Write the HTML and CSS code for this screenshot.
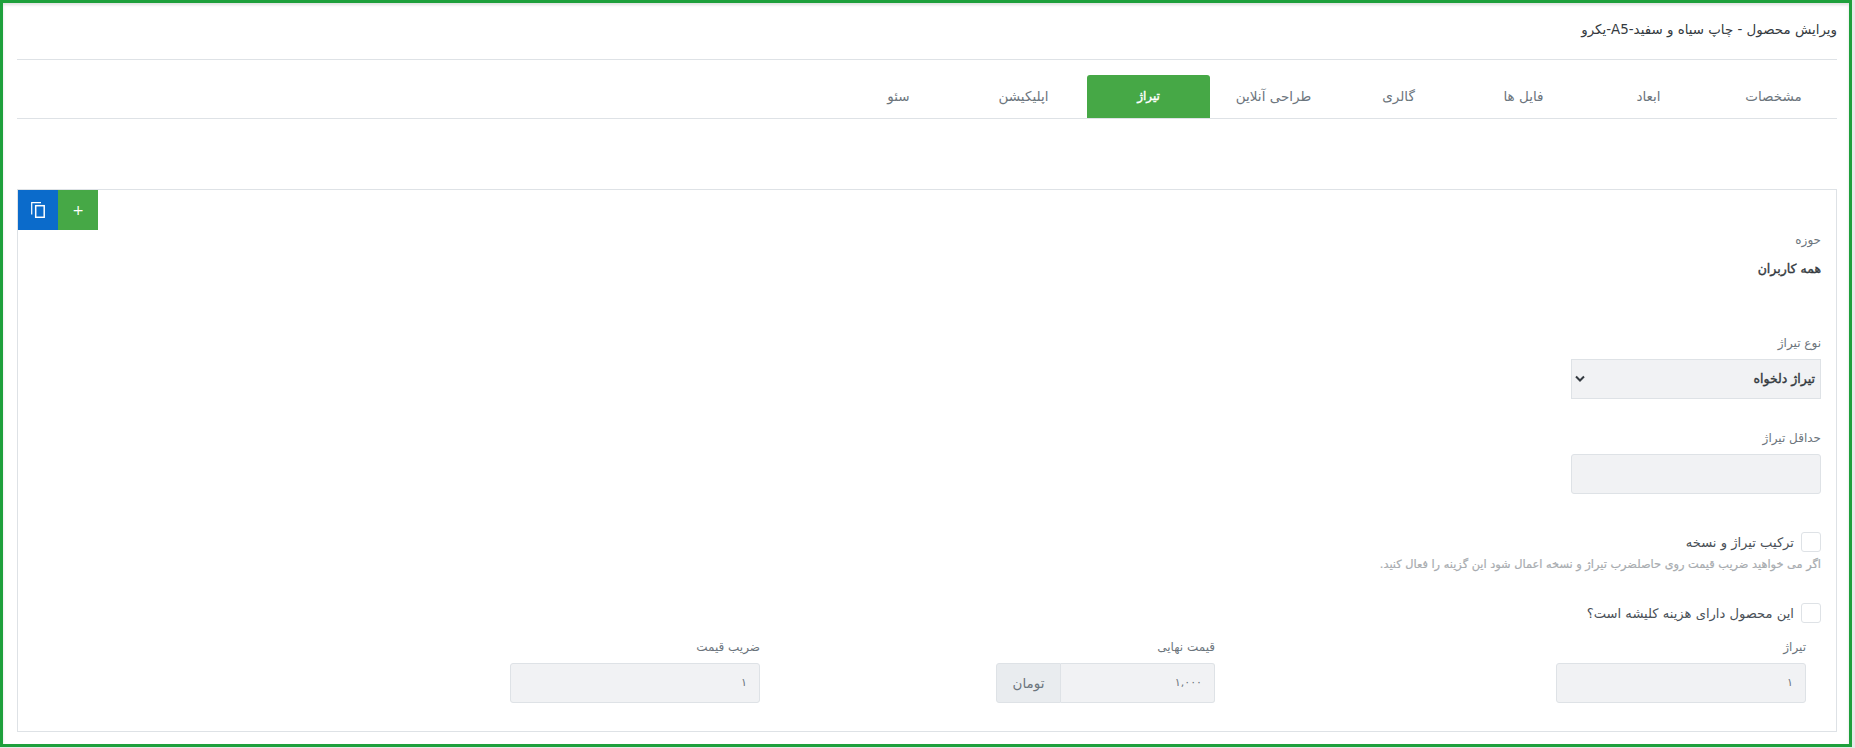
FILE: index.html
```html
<!DOCTYPE html>
<html lang="fa" dir="rtl">
<head>
  <meta charset="UTF-8" />
  <title>ویرایش محصول</title>
  <link rel="stylesheet" href="styles.css">
</head>
<body>
  <div class="frame">
    <h1 class="page-title">ویرایش محصول - چاپ سیاه و سفید-A5-یکرو</h1>

    <nav class="tabs">
      <a class="tab">مشخصات</a>
      <a class="tab">ابعاد</a>
      <a class="tab">فایل ها</a>
      <a class="tab">گالری</a>
      <a class="tab">طراحی آنلاین</a>
      <a class="tab active">تیراژ</a>
      <a class="tab">اپلیکیشن</a>
      <a class="tab">سئو</a>
    </nav>

    <section class="card">
      <div class="card-actions">
        <button class="btn-add">+</button>
        <button class="btn-copy">
          <svg width="14" height="16" viewBox="0 0 14 16" fill="none" stroke="#fff">
            <path d="M.7 12.5V.7H10" stroke-width="1.2"/>
            <rect x="4.7" y="3.7" width="8.5" height="11.6" stroke-width="1.5"/>
          </svg>
        </button>
      </div>

      <div class="field-scope">
        <div class="label">حوزه</div>
        <div class="scope-value">همه کاربران</div>
      </div>

      <div class="field field-type">
        <label class="label">نوع تیراژ</label>
        <div class="control control-select">
          <span>تیراژ دلخواه</span>
          <svg width="10" height="8" viewBox="0 0 10 8" fill="none" stroke="#343a40" stroke-width="2">
            <path d="M1 1.5l4 4 4-4"/>
          </svg>
        </div>
      </div>

      <div class="field field-min">
        <label class="label">حداقل تیراژ</label>
        <div class="control"></div>
      </div>

      <div class="check-row check-combo">
        <span class="checkbox"></span>
        <span class="check-text">ترکیب تیراژ و نسخه</span>
      </div>
      <div class="hint">اگر می خواهید ضریب قیمت روی حاصلضرب تیراژ و نسخه اعمال شود این گزینه را فعال کنید.</div>

      <div class="check-row check-cliche">
        <span class="checkbox"></span>
        <span class="check-text">این محصول دارای هزینه کلیشه است؟</span>
      </div>

      <div class="price-row">
        <div class="price-col col-qty">
          <label class="label">تیراژ</label>
          <div class="control">۱</div>
        </div>
        <div class="price-col col-final">
          <label class="label">قیمت نهایی</label>
          <div class="input-group">
            <div class="control">۱,۰۰۰</div>
            <span class="addon">تومان</span>
          </div>
        </div>
        <div class="price-col col-factor">
          <label class="label">ضریب قیمت</label>
          <div class="control">۱</div>
        </div>
      </div>
    </section>
  </div>
</body>
</html>
```

FILE: styles.css
```css
* {
  box-sizing: border-box;
}

html, body {
  margin: 0;
  height: 100%;
}

body {
  font-family: "DejaVu Sans", sans-serif;
  font-size: 12px;
  color: #495057;
  background: #e8e8e8;
  overflow: hidden;
}

.frame {
  width: 1852px;
  height: 747px;
  margin-left: 0;
  margin-right: auto;
  background: #fff;
  border: 3px solid #1ea03c;
  padding: 0 12px 0 14px;
  box-shadow: inset 0 2px 3px rgba(0, 0, 0, 0.12);
}

.page-title {
  margin: 0;
  height: 57px;
  padding-top: 17px;
  font-size: 13.4px;
  font-weight: 400;
  color: #343a40;
  line-height: 20px;
  border-bottom: 1px solid #dee2e6;
}

.tabs {
  display: flex;
  height: 59px;
  padding: 15px 2px 0 0;
  border-bottom: 1px solid #dee2e6;
}

.tab {
  width: 123px;
  height: 43px;
  margin-left: 2px;
  line-height: 43px;
  text-align: center;
  color: #6c757d;
  font-size: 13.5px;
}

.tab.active {
  background: #46a846;
  color: #fff;
  font-size: 12px;
  -webkit-text-stroke: 0.4px #fff;
  border-radius: 3px 3px 0 0;
}

.card {
  position: relative;
  height: 543px;
  margin-top: 70px;
  border: 1px solid #dee2e6;
  padding: 0 15px;
}

.card-actions {
  position: absolute;
  top: 0;
  left: 0;
  display: flex;
}

.card-actions button {
  width: 40px;
  height: 40px;
  border: 0;
  padding: 0;
  color: #fff;
  font-family: "DejaVu Sans", sans-serif;
  font-size: 14px;
  display: flex;
  align-items: center;
  justify-content: center;
}

.btn-add {
  background: #46a846;
  order: 1;
}

.btn-copy {
  background: #0b6bcb;
  order: 2;
}

.label {
  display: block;
  color: #6c757d;
  font-size: 12px;
  line-height: 18px;
}

.field-scope {
  padding-top: 41px;
}

.scope-value {
  margin-top: 10px;
  font-size: 12.5px;
  -webkit-text-stroke: 0.4px #343a40;
  color: #343a40;
  line-height: 20px;
}

.field {
  width: 250px;
}

.field-type {
  margin-top: 55px;
}

.field-min {
  margin-top: 30px;
}

.control {
  height: 40px;
  margin-top: 7px;
  padding: 0 12px;
  background: #f1f2f4;
  border: 1px solid #dee2e6;
  border-radius: 3px;
  line-height: 38px;
  font-size: 11px;
  color: #6c757d;
}

.control-select {
  display: flex;
  justify-content: space-between;
  align-items: center;
  padding: 0 5px 0 3px;
  border-radius: 0;
  font-size: 12.5px;
  -webkit-text-stroke: 0.4px #343a40;
  color: #343a40;
}

.check-row {
  display: flex;
  align-items: center;
  gap: 7px;
}

.check-combo {
  margin-top: 38px;
}

.check-cliche {
  margin-top: 31px;
}

.checkbox {
  width: 20px;
  height: 20px;
  border: 1px solid #dee2e6;
  border-radius: 3px;
  background: #fff;
}

.check-text {
  font-size: 13.1px;
  color: #495057;
}

.hint {
  margin-top: 4px;
  font-size: 11.35px;
  -webkit-text-stroke: 0.2px #a8acb0;
  color: #a8acb0;
  line-height: 16px;
}

.price-row {
  display: flex;
  margin-top: 15px;
  padding-right: 15px;
}

.col-qty {
  width: 250px;
}

.col-final {
  width: 219px;
  margin-right: 341px;
}

.col-factor {
  width: 250px;
  margin-right: 236px;
}

.input-group {
  display: flex;
  margin-top: 7px;
}

.input-group .control {
  flex: 1;
  margin-top: 0;
  border-radius: 0 3px 3px 0;
  border-left: 0;
}

.addon {
  width: 65px;
  height: 40px;
  line-height: 38px;
  text-align: center;
  background: #e9ecef;
  border: 1px solid #dee2e6;
  border-radius: 3px 0 0 3px;
  color: #6c757d;
  font-size: 13.5px;
}
```
